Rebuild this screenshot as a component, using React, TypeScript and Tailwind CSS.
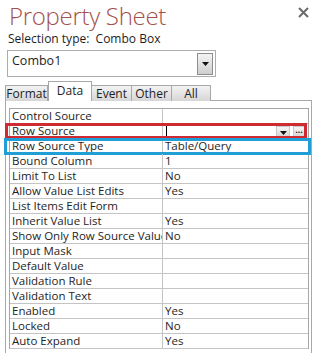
const rows: [string, string][] = [
  ['Control Source', ''],
  ['Row Source', ''],
  ['Row Source Type', 'Table/Query'],
  ['Bound Column', '1'],
  ['Limit To List', 'No'],
  ['Allow Value List Edits', 'Yes'],
  ['List Items Edit Form', ''],
  ['Inherit Value List', 'Yes'],
  ['Show Only Row Source Values', 'No'],
  ['Input Mask', ''],
  ['Default Value', ''],
  ['Validation Rule', ''],
  ['Validation Text', ''],
  ['Enabled', 'Yes'],
  ['Locked', 'No'],
  ['Auto Expand', 'Yes'],
]

const tabs = ['Format', 'Data', 'Event', 'Other', 'All']
const tabWidths = ['w-[43px]', 'w-[44px]', 'w-[41px]', 'w-[41px]', 'w-[40px]']

function DownArrow() {
  return (
    <svg width="7" height="4" viewBox="0 0 7 4">
      <path d="M0 0h7L3.5 4z" fill="#111" />
    </svg>
  )
}

function RowSourceCell() {
  return (
    <div className="flex items-center h-full pr-[3px]">
      <div className="flex-1 h-full flex items-center">
        <div className="w-px h-[11px] bg-black ml-[1px]" />
      </div>
      <div className="w-[14px] h-[11px] flex items-end justify-center pb-[1px] border border-[#c8c8c8] bg-gradient-to-b from-[#f6f6f6] to-[#d8d8d8]">
        <DownArrow />
      </div>
      <div className="w-[12px] h-[11px] ml-[3px] flex items-center justify-center border border-[#c8c8c8] bg-gradient-to-b from-[#f6f6f6] to-[#d8d8d8] text-[9px] font-bold leading-none pb-[4px]">
        ...
      </div>
    </div>
  )
}

export default function App() {
  return (
    <div
      className="w-[315px] h-[353px] bg-white overflow-hidden text-[#1e1e1e]"
      style={{ fontFamily: '"Open Sans", "Noto Sans", sans-serif' }}
    >
      <div className="flex justify-between items-start">
        <h1 className="pl-[9px] pt-[1px] text-[24px] font-light leading-[30px] text-[#a4504c] tracking-[-0.3px]">
          Property Sheet
        </h1>
        <svg width="11" height="11" viewBox="0 0 11 11" className="mt-[7px] mr-[6px]">
          <path d="M1 1L10 10M10 1L1 10" stroke="#6a6a6a" strokeWidth="2" />
        </svg>
      </div>

      <div className="pl-[8px] h-[15px] text-[12px] leading-[15px]">
        Selection type:&nbsp; Combo Box
      </div>

      <div className="ml-[7px] mt-[4px] w-[209px] h-[27px] border border-[#abadb3] flex items-center pl-[4px] pr-[2px]">
        <span className="flex-1 text-[12.5px] leading-none pb-[5px]">Combo1</span>
        <div className="w-[16px] h-[22px] border border-[#8d8d8d] bg-gradient-to-b from-[#f4f4f4] to-[#cfcfcf] flex items-center justify-center">
          <DownArrow />
        </div>
      </div>

      <div className="flex items-end pl-[5px] mt-[4px] h-[20px] relative z-10">
        {tabs.map((t, i) =>
          t === 'Data' ? (
            <div
              key={t}
              className={`${tabWidths[i]} h-[20px] border border-b-0 border-[#a8a8a8] bg-white text-[12px] flex justify-center pt-[1px] leading-[15px]`}
            >
              {t}
            </div>
          ) : (
            <div
              key={t}
              className={`${tabWidths[i]} h-[16px] border border-b-0 border-[#a8a8a8] -ml-px first:ml-0 bg-gradient-to-b from-[#f3f3f3] to-[#d6d6d6] text-[12px] flex justify-center leading-[16px]`}
            >
              {t}
            </div>
          ),
        )}
      </div>

      <div className="ml-[5px] mr-[3px] -mt-px h-[260px] border border-[#a8a8a8] pl-[3px] pr-[2px] pt-[7px]">
        <div className="border-t border-l border-r border-[#a6a6a6]">
          {rows.map(([k, v]) => (
            <div
              key={k}
              className="relative flex h-[15px] border-b border-[#c4c4c4] text-[11.5px] leading-[14px]"
            >
              <div className="w-[153px] shrink-0 border-r border-[#c4c4c4] pl-[2px] whitespace-nowrap overflow-hidden">
                {k}
              </div>
              <div className="flex-1 pl-[2px] whitespace-nowrap">
                {k === 'Row Source' ? <RowSourceCell /> : v}
              </div>
              {k === 'Row Source' && (
                <div className="absolute left-[-5px] right-[1px] -top-px h-[16px] border-[3px] border-[#cf2a34] pointer-events-none" />
              )}
              {k === 'Row Source Type' && (
                <div className="absolute left-[-6px] right-[-3px] -top-px h-[17px] border-[3px] border-[#1f9fd6] pointer-events-none" />
              )}
            </div>
          ))}
        </div>
      </div>
    </div>
  )
}
